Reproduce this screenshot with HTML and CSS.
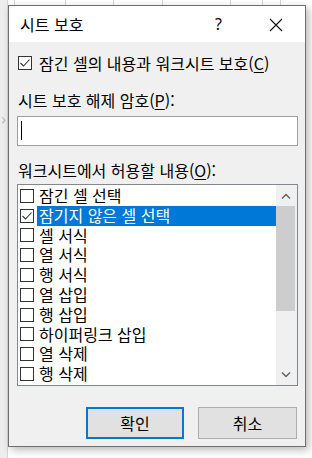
FILE: index.html
```html
<!DOCTYPE html>
<html lang="ko">
<head>
<meta charset="utf-8">
<link rel="stylesheet" href="styles.css">
</head>
<body>
<div class="desk">
  <div class="grid-top">
    <span class="gl" style="left:14px"></span>
    <span class="gl" style="left:65px"></span>
    <span class="gl" style="left:113px"></span>
    <span class="gl" style="left:162px"></span>
    <span class="gl" style="left:230px"></span>
    <span class="gl" style="left:262px"></span>
    <span class="gl" style="left:280px"></span>
  </div>
  <div class="side-left"><span class="chev">›</span></div>

  <div class="dialog">
    <div class="titlebar">
      <span class="title">시트 보호</span>
      <span class="help">?</span>
      <svg class="close" width="14" height="14" viewBox="0 0 14 14"><path d="M1 1 L13 13 M13 1 L1 13" stroke="#111" stroke-width="1.1" fill="none"/></svg>
    </div>
    <div class="body">
      <label class="check-row top-check">
        <svg class="cb" width="14" height="14" viewBox="0 0 14 14"><rect x="0.5" y="0.5" width="13" height="13" fill="#fff" stroke="#333"/><path d="M2.5 7 L5.5 10 L11.5 3.5" stroke="#333" stroke-width="1.1" fill="none"/></svg>
        <span>잠긴 셀의 내용과 워크시트 보호(<u>C</u>)</span>
      </label>
      <div class="label lbl-pw">시트 보호 해제 암호(<u>P</u>):</div>
      <div class="input"><span class="caret"></span></div>
      <div class="label lbl-allow">워크시트에서 허용할 내용(<u>O</u>):</div>
      <div class="listbox">
        <div class="items">
          <div class="item"><span class="box"></span><span class="txt">잠긴 셀 선택</span></div>
          <div class="item sel"><svg class="cb" width="14" height="14" viewBox="0 0 14 14"><rect x="0.5" y="0.5" width="13" height="13" fill="#fff" stroke="#333"/><path d="M2.5 7 L5.5 10 L11.5 3.5" stroke="#333" stroke-width="1.1" fill="none"/></svg><span class="txt">잠기지 않은 셀 선택</span></div>
          <div class="item"><span class="box"></span><span class="txt">셀 서식</span></div>
          <div class="item"><span class="box"></span><span class="txt">열 서식</span></div>
          <div class="item"><span class="box"></span><span class="txt">행 서식</span></div>
          <div class="item"><span class="box"></span><span class="txt">열 삽입</span></div>
          <div class="item"><span class="box"></span><span class="txt">행 삽입</span></div>
          <div class="item"><span class="box"></span><span class="txt">하이퍼링크 삽입</span></div>
          <div class="item"><span class="box"></span><span class="txt">열 삭제</span></div>
          <div class="item"><span class="box"></span><span class="txt">행 삭제</span></div>
        </div>
        <div class="scrollbar">
          <div class="arrow"><svg width="10" height="6" viewBox="0 0 10 6"><path d="M1 5.5 L5 1.5 L9 5.5" stroke="#606060" stroke-width="1.4" fill="none"/></svg></div>
          <div class="track"><div class="thumb"></div></div>
          <div class="arrow"><svg width="10" height="6" viewBox="0 0 10 6"><path d="M1 0.5 L5 4.5 L9 0.5" stroke="#606060" stroke-width="1.4" fill="none"/></svg></div>
        </div>
      </div>
      <div class="buttons">
        <button class="btn primary">확인</button>
        <button class="btn">취소</button>
      </div>
    </div>
  </div>
</div>
</body>
</html>
```
FILE: styles.css
```css
* { box-sizing: border-box; }
html, body { margin: 0; padding: 0; }
body {
  width: 312px;
  height: 458px;
  overflow: hidden;
  font-family: "Noto Sans CJK KR", "Noto Sans", sans-serif;
  font-size: 16px;
  color: #000;
}
.desk {
  position: relative;
  width: 312px;
  height: 458px;
  background: #ffffff;
}
.grid-top {
  position: absolute;
  left: 0; top: 0;
  width: 312px; height: 6px;
}
.gl {
  position: absolute;
  top: 0;
  width: 1px;
  height: 6px;
  background: #d4d4d4;
}
.side-left {
  position: absolute;
  left: 0; top: 0;
  width: 8px; height: 458px;
  background: #ededed;
  border-right: 1px solid #d6d6d6;
}
.chev {
  position: absolute;
  left: 1px; top: 108px;
  color: #b5b5b5;
  font-size: 16px;
  line-height: 20px;
}
.dialog {
  position: absolute;
  left: 8px; top: 5px;
  width: 298px; height: 442px;
  background: #f0f0f0;
  border: 1px solid #6e6e6e;
  box-shadow: 3px 3px 8px rgba(0,0,0,0.28);
  display: flex;
  flex-direction: column;
}
.titlebar {
  height: 36px;
  background: #fff;
  display: flex;
  align-items: center;
  padding-left: 11px;
  flex-shrink: 0;
}
.title {
  line-height: 20px;
  flex: 1;
}
.help {
  font-family: "Noto Sans", sans-serif;
  font-size: 16px;
  line-height: 20px;
  margin-right: 47px;
}
.close {
  margin-right: 22px;
  margin-top: 1px;
}
.body {
  padding: 0 7px 0 8px;
  display: flex;
  flex-direction: column;
}
.check-row {
  display: flex;
  align-items: center;
  height: 20px;
  line-height: 20px;
  white-space: nowrap;
}
.top-check {
  margin-top: 11px;
  padding-left: 1px;
}
.top-check .cb { margin-right: 7px; }
u { text-decoration: underline; text-underline-offset: 2px; }
.label {
  height: 20px;
  line-height: 20px;
  padding-left: 1px;
  white-space: nowrap;
}
.lbl-pw { margin-top: 17px; }
.input {
  margin-top: 6px;
  height: 30px;
  background: #fff;
  border: 1px solid #a0a0a0;
  position: relative;
}
.caret {
  position: absolute;
  left: 3px; top: 4px;
  width: 1px; height: 19px;
  background: #000;
}
.lbl-allow { margin-top: 14px; }
.listbox {
  margin-top: 4px;
  height: 202px;
  background: #fff;
  border: 1px solid #828790;
  display: flex;
  padding: 1px 0 0 2px;
}
.items {
  flex: 1;
  display: flex;
  flex-direction: column;
}
.item {
  height: 19.8px;
  display: flex;
  align-items: center;
  white-space: nowrap;
}
.box {
  width: 14px; height: 14px;
  border: 1px solid #333;
  background: #fff;
  flex-shrink: 0;
}
.txt {
  margin-left: 3px;
  padding: 0 2px;
  line-height: 19.8px;
}
.item.sel .txt {
  flex: 1;
  background: #0078d7;
  color: #fff;
}
.scrollbar {
  width: 21px;
  margin-top: -1px;
  background: #f0f0f0;
  display: flex;
  flex-direction: column;
}
.arrow {
  height: 21px;
  display: flex;
  align-items: center;
  justify-content: center;
  padding-right: 2px;
}
.track {
  flex: 1;
  padding-right: 2px;
}
.thumb {
  height: 105px;
  background: #cdcdcd;
}
.buttons {
  margin-top: 21px;
  display: flex;
  justify-content: flex-end;
  gap: 14px;
  padding-right: 1px;
}
.btn {
  width: 99px;
  height: 32px;
  background: #e1e1e1;
  border: 1px solid #adadad;
  font-family: "Noto Sans CJK KR", "Noto Sans", sans-serif;
  font-size: 16px;
  color: #000;
  padding: 0;
  line-height: 20px;
}
.btn.primary {
  border: 2px solid #0078d7;
  width: 98px;
}
```
